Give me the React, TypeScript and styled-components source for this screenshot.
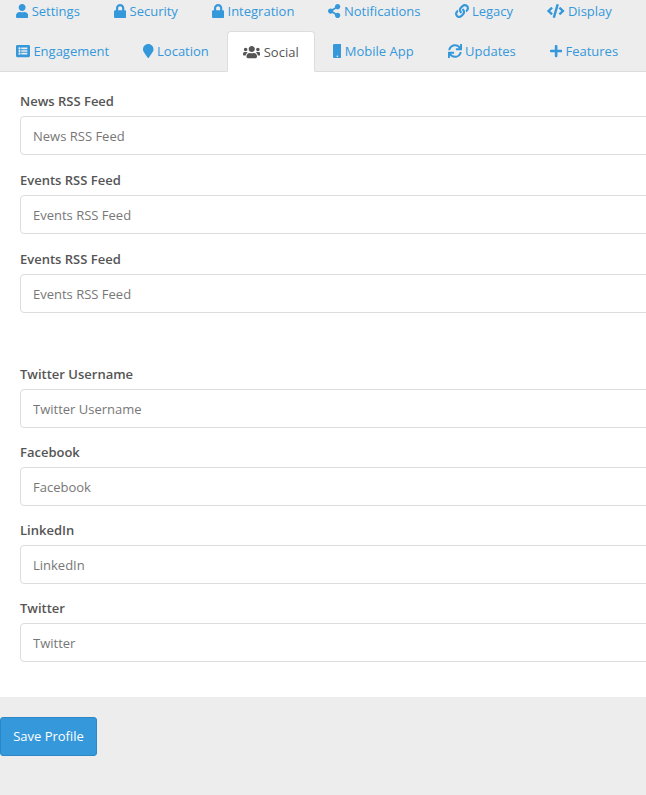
import React from 'react';
import styled, {createGlobalStyle} from 'styled-components';
import {
  FaUser,
  FaLock,
  FaShareAlt,
  FaLink,
  FaCode,
  FaListAlt,
  FaMapMarker,
  FaUsers,
  FaMobile,
  FaSync,
  FaPlus,
} from 'react-icons/fa';

const GlobalStyle = createGlobalStyle`
  html, body {
    margin: 0;
    padding: 0;
    background: #ededed;
    overflow: hidden;
  }
  * {
    box-sizing: border-box;
  }
`;

// iconWidth keeps each glyph at its own aspect ratio for a 14px tall icon
const tabRows = [
  [
    {label: 'Settings', icon: <FaUser />, iconWidth: 12.25},
    {label: 'Security', icon: <FaLock />, iconWidth: 12.25},
    {label: 'Integration', icon: <FaLock />, iconWidth: 12.25},
    {label: 'Notifications', icon: <FaShareAlt />, iconWidth: 12.25},
    {label: 'Legacy', icon: <FaLink />, iconWidth: 14},
    {label: 'Display', icon: <FaCode />, iconWidth: 17.5},
  ],
  [
    {label: 'Engagement', icon: <FaListAlt />, iconWidth: 14},
    {label: 'Location', icon: <FaMapMarker />, iconWidth: 10.5},
    {label: 'Social', icon: <FaUsers />, iconWidth: 17.5, active: true},
    {label: 'Mobile App', icon: <FaMobile />, iconWidth: 8.75},
    {label: 'Updates', icon: <FaSync />, iconWidth: 14},
    {label: 'Features', icon: <FaPlus />, iconWidth: 12.25},
  ],
];

const App = () => (
  <Page>
    <GlobalStyle />
    <TabBar>
      {tabRows.map((row, i) => (
        <TabRow key={i}>
          {row.map(tab => (
            <Tab key={tab.label} $active={!!tab.active}>
              <TabIcon $width={tab.iconWidth}>{tab.icon}</TabIcon>
              {tab.label}
            </Tab>
          ))}
        </TabRow>
      ))}
    </TabBar>
    <Panel>
      <FieldGroup>
        <Field label="News RSS Feed" />
        <Field label="Events RSS Feed" />
        <Field label="Events RSS Feed" />
      </FieldGroup>
      <FieldGroup $tight>
        <Field label="Twitter Username" />
        <Field label="Facebook" />
        <Field label="LinkedIn" />
        <Field label="Twitter" />
      </FieldGroup>
    </Panel>
    <Footer>
      <SaveButton>Save Profile</SaveButton>
    </Footer>
  </Page>
);

const Field = ({label}: {label: string}) => (
  <div>
    <Label>{label}</Label>
    <Input placeholder={label} />
  </div>
);

export default App;

const Page = styled.div`
  width: 646px;
  height: 795px;
  overflow: hidden;
  background: #ededed;
  font-family: 'Open Sans', sans-serif;
  font-size: 13px;
  line-height: 18px;
`;

const TabBar = styled.div`
  margin-top: -9px;
  height: 81px;
  border-bottom: 1px solid #ddd;
`;

const TabRow = styled.div`
  display: flex;
  gap: 2px;
  height: 40px;
`;

const Tab = styled.a<{$active: boolean}>`
  display: flex;
  align-items: center;
  height: ${p => (p.$active ? '41px' : '40px')};
  padding: 0 15px;
  white-space: nowrap;
  color: ${p => (p.$active ? '#555' : '#3498db')};
  background: ${p => (p.$active ? '#fff' : 'transparent')};
  border: 1px solid ${p => (p.$active ? '#ddd' : 'transparent')};
  border-bottom-color: ${p => (p.$active ? '#fff' : 'transparent')};
  border-radius: 4px 4px 0 0;
  position: relative;
`;

const TabIcon = styled.span<{$width: number}>`
  display: block;
  flex: none;
  width: ${p => p.$width}px;
  height: 14px;
  margin-right: 3.4px;

  svg {
    display: block;
    width: 100%;
    height: 100%;
  }
`;

const Panel = styled.div`
  height: 625px;
  padding: 20px 0 0 20px;
  background: #fff;
`;

const FieldGroup = styled.div<{$tight?: boolean}>`
  display: flex;
  flex-direction: column;
  gap: ${p => (p.$tight ? '15px' : '16px')};
  margin-bottom: 52px;
`;

const Label = styled.label`
  display: block;
  margin-bottom: 6px;
  font-weight: 600;
  color: #555;
`;

const Input = styled.input`
  display: block;
  width: 700px;
  height: 39px;
  padding: 0 12px;
  border: 1px solid #ddd;
  border-radius: 4px;
  background: #fff;
  font-family: inherit;
  font-size: 13px;
  outline: none;

  &::placeholder {
    color: #777;
    opacity: 1;
  }
`;

const Footer = styled.div`
  padding-top: 20px;
`;

const SaveButton = styled.button`
  display: block;
  width: 97px;
  height: 39px;
  padding: 0 0 2px;
  border: 1px solid #2a88c8;
  border-radius: 3px;
  background: #3498db;
  color: #fff;
  font-family: inherit;
  font-size: 13px;
`;
